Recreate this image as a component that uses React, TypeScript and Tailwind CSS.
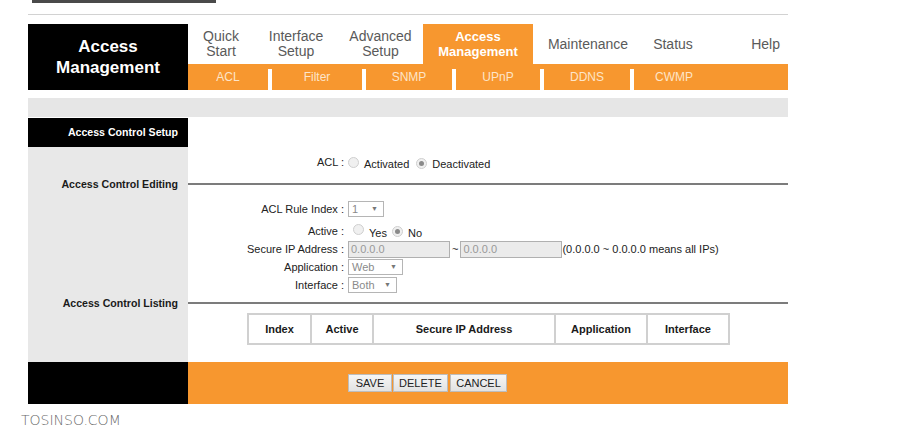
import React from 'react';

const tabs = [
    { label: ['Quick', 'Start'], w: 'w-[66px]' },
    { label: ['Interface', 'Setup'], w: 'w-[84px]' },
    { label: ['Advanced', 'Setup'], w: 'w-[85px]' },
];

const subTabs = [
    { label: 'ACL', w: 'w-[80px]' },
    { label: 'Filter', w: 'w-[90px]' },
    { label: 'SNMP', w: 'w-[86px]' },
    { label: 'UPnP', w: 'w-[84px]' },
    { label: 'DDNS', w: 'w-[86px]' },
    { label: 'CWMP', w: 'w-[80px]' },
];

function Radio({ checked }: { checked?: boolean }) {
    return (
        <span className="inline-flex items-center justify-center w-[11px] h-[11px] rounded-full border border-[#cfcfcf] bg-[#f0f0f0] shrink-0">
            {checked && <span className="w-[5px] h-[5px] rounded-full bg-[#8a8a8a]" />}
        </span>
    );
}

function Select({ value, w }: { value: string; w: string }) {
    return (
        <span className={`${w} h-[16px] border border-[#b5b5b5] bg-white flex items-center justify-between pl-[3px] pr-[5px] text-[#8a8a8a]`}>
            <span>{value}</span>
            <span className="text-[7px] text-[#777]">▼</span>
        </span>
    );
}

function IpInput() {
    return (
        <span className="w-[102px] h-[17px] border border-[#b0b0b0] bg-[#ebebeb] flex items-center pl-[2px] text-[#999]">0.0.0.0</span>
    );
}

function FormRow({ label, children, className = 'h-[18px]' }: { label: string; children: React.ReactNode; className?: string }) {
    return (
        <div className={`flex items-center ${className}`}>
            <span className="w-[158px] text-right pr-[2px] text-[#222]">{label} :</span>
            <div className="flex items-center pl-[2px]">{children}</div>
        </div>
    );
}

function SectionRow({ label }: { label: string }) {
    return (
        <div className="flex h-[14px]">
            <div className="w-[160px] bg-[#e8e8e8] text-right pr-[10px] font-bold text-[10.6px] text-[#1a1a1a] leading-[14px]">{label}</div>
            <div className="flex-1 flex items-center">
                <div className="w-full h-[2px] bg-[#7c7c7c]" />
            </div>
        </div>
    );
}

export default function App() {
    return (
        <div className="w-[917px] h-[440px] bg-white overflow-hidden font-['Liberation_Sans',Arial,sans-serif] text-[11px]">
            <div className="ml-[28px] w-[760px]">
                {/* top strip */}
                <div className="ml-[4px] w-[184px] h-[3px] bg-[#4a4a4a]" />
                <div className="mt-[11px] h-px bg-[#d2d2d2]" />

                {/* header */}
                <div className="mt-[9px] flex h-[66px]">
                    <div className="w-[160px] bg-black flex items-center justify-center text-center text-white font-bold text-[17px] leading-[21px]">
                        Access<br />Management
                    </div>
                    <div className="flex-1 flex flex-col">
                        <div className="h-[40px] flex text-[14px] leading-[15px] text-[#5a5a5a]">
                            {tabs.map((t) => (
                                <div key={t.label[0]} className={`${t.w} flex flex-col items-center justify-center`}>
                                    <span>{t.label[0]}</span>
                                    <span>{t.label[1]}</span>
                                </div>
                            ))}
                            <div className="w-[110px] bg-[#f7972f] flex flex-col items-center justify-center text-white font-bold text-[13px]">
                                <span>Access</span>
                                <span>Management</span>
                            </div>
                            <div className="w-[110px] flex items-center justify-center">Maintenance</div>
                            <div className="w-[60px] flex items-center justify-center">Status</div>
                            <div className="flex-1 flex items-center justify-end pr-[8px]">Help</div>
                        </div>
                        <div className="h-[26px] bg-[#f7972f] flex text-[12px] text-[#fde5c9]">
                            {subTabs.map((s, i) => (
                                <React.Fragment key={s.label}>
                                    {i > 0 && <div className="w-[4px] mt-[5px] bg-white" />}
                                    <div className={`${s.w} flex items-center justify-center`}>{s.label}</div>
                                </React.Fragment>
                            ))}
                        </div>
                    </div>
                </div>

                <div className="mt-[8px] h-[19px] bg-[#e6e6e6]" />

                {/* body */}
                <div className="mt-px flex flex-col">
                    <div className="flex h-[29px]">
                        <div className="w-[160px] bg-black text-white font-bold text-[10.6px] flex items-center justify-end pr-[10px]">Access Control Setup</div>
                        <div className="flex-1" />
                    </div>

                    <div className="flex h-[30px]">
                        <div className="w-[160px] bg-[#e8e8e8]" />
                        <div className="flex-1 flex items-center">
                            <FormRow label="ACL">
                                <span className="flex items-center gap-[5px] mt-[1px]">
                                    <Radio />
                                    <span className="mt-[3px] text-[#222]">Activated</span>
                                    <span className="ml-[2px]"><Radio checked /></span>
                                    <span className="mt-[3px] text-[#222]">Deactivated</span>
                                </span>
                            </FormRow>
                        </div>
                    </div>

                    <SectionRow label="Access Control Editing" />

                    <div className="flex">
                        <div className="w-[160px] bg-[#e8e8e8]" />
                        <div className="flex-1 flex flex-col pt-[9px] pb-[2px]">
                            <FormRow label="ACL Rule Index" className="h-[18px] mb-[4px]">
                                <Select value="1" w="w-[36px]" />
                            </FormRow>
                            <FormRow label="Active">
                                <span className="flex items-center gap-[5px]">
                                    <span className="ml-[5px]"><Radio /></span>
                                    <span className="mt-[5px] text-[#222]">Yes</span>
                                    <Radio checked />
                                    <span className="mt-[5px] text-[#222]">No</span>
                                </span>
                            </FormRow>
                            <FormRow label="Secure IP Address">
                                <IpInput />
                                <span className="px-[2px] text-[#222]">~</span>
                                <IpInput />
                                <span className="text-[#222]">(0.0.0.0 ~ 0.0.0.0 means all IPs)</span>
                            </FormRow>
                            <FormRow label="Application">
                                <Select value="Web" w="w-[55px]" />
                            </FormRow>
                            <FormRow label="Interface">
                                <Select value="Both" w="w-[49px]" />
                            </FormRow>
                        </div>
                    </div>

                    <SectionRow label="Access Control Listing" />

                    <div className="flex h-[52px]">
                        <div className="w-[160px] bg-[#e8e8e8]" />
                        <div className="flex-1 pt-[3px] pl-[59px]">
                            <table className="border-collapse border-2 border-[#d0d0d0] font-bold text-[#1a1a1a]">
                                <tbody>
                                    <tr className="h-[30px]">
                                        <td className="w-[63px] border-2 border-[#d0d0d0] text-center">Index</td>
                                        <td className="w-[62px] border-2 border-[#d0d0d0] text-center">Active</td>
                                        <td className="w-[182px] border-2 border-[#d0d0d0] text-center">Secure IP Address</td>
                                        <td className="w-[92px] border-2 border-[#d0d0d0] text-center">Application</td>
                                        <td className="w-[82px] border-2 border-[#d0d0d0] text-center">Interface</td>
                                    </tr>
                                </tbody>
                            </table>
                        </div>
                    </div>

                    {/* footer */}
                    <div className="flex h-[42px]">
                        <div className="w-[160px] bg-black" />
                        <div className="flex-1 bg-[#f7972f] flex items-center pl-[160px] gap-[1px] text-[#222]">
                            <button className="w-[44px] h-[18px] border border-[#bdbdbd] bg-gradient-to-b from-[#f6f6f6] to-[#e2e2e2]">SAVE</button>
                            <button className="w-[55px] h-[18px] border border-[#bdbdbd] bg-gradient-to-b from-[#f6f6f6] to-[#e2e2e2]">DELETE</button>
                            <button className="ml-[1px] w-[57px] h-[18px] border border-[#bdbdbd] bg-gradient-to-b from-[#f6f6f6] to-[#e2e2e2]">CANCEL</button>
                        </div>
                    </div>
                </div>
            </div>

            <div className="mt-[6px] pl-[21px] text-[14px] text-[#6a6a6a] font-['DejaVu_Sans',sans-serif] font-extralight">TOSINSO.COM</div>
        </div>
    );
}
